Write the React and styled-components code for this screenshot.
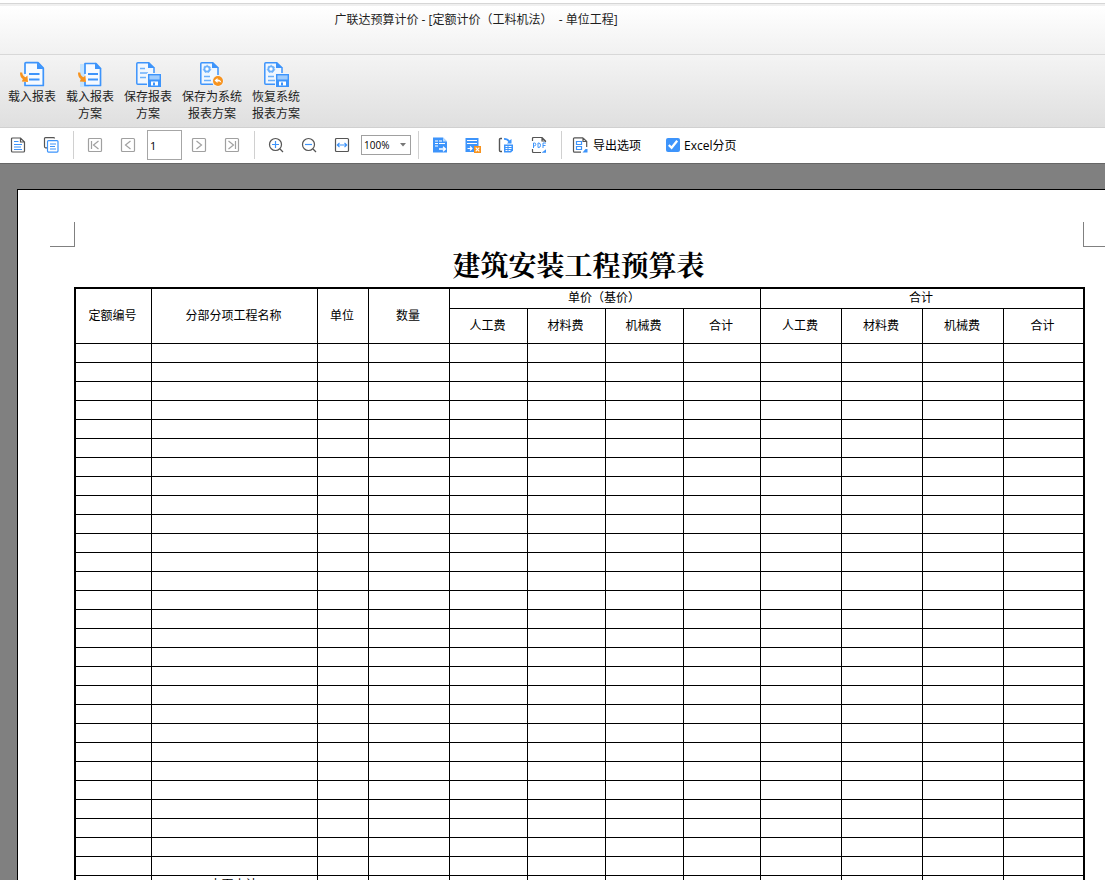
import React, { useState } from 'react'
import styled, { createGlobalStyle } from 'styled-components'

const BLUE = '#3d94fb'
const DARK = '#555555'
const GREY = '#a0a0a0'
const ORANGE = '#f7931e'

const GlobalStyle = createGlobalStyle`
  * {
    box-sizing: border-box;
  }

  body {
    margin: 0;
    font-family: 'Open Sans', 'Noto Sans CJK SC', sans-serif;
    font-size: 12px;
    color: #1e1e1e;
  }

  button,
  input,
  select {
    font: inherit;
    color: inherit;
  }
`

const Window = styled.div`
  display: flex;
  flex-direction: column;
  height: 100vh;
  overflow: hidden;
`

const TabStrip = styled.div`
  flex: none;
  height: 4px;
  background: #ffffff;
  border-bottom: 1px solid #d6d6d6;
`

const TitleBar = styled.header`
  flex: none;
  display: flex;
  justify-content: center;
  height: 51px;
  padding: 6px 153px 0 0;
  border-top: 2px solid #f0f0f0;
  border-bottom: 1px solid #d8d8d8;
  background: linear-gradient(#ffffff, #f1f1f1);
`

const AppTitle = styled.h1`
  margin: 0;
  font-size: 12px;
  line-height: 16px;
  font-weight: 400;
  white-space: pre;
`

const Ribbon = styled.nav`
  flex: none;
  display: flex;
  align-items: flex-start;
  height: 73px;
  padding: 6px 3px 0;
  border-bottom: 1px solid #d0d0d0;
  background: linear-gradient(#f4f4f4, #dfdfdf);
`

const RibbonButton = styled.button`
  display: flex;
  flex-direction: column;
  align-items: center;
  padding: 0 5px;
  border: 0;
  background: none;
  line-height: 17px;
`

const Toolbar = styled.div`
  flex: none;
  display: flex;
  align-items: center;
  height: 36px;
  padding: 0 0 1px 2px;
  border-bottom: 1px solid #666666;
  background: #ffffff;
`

const IconButton = styled.button`
  display: flex;
  align-items: center;
  justify-content: center;
  width: 33px;
  height: 30px;
  padding: 0 1px 0 0;
  border: 0;
  background: none;
`

const Separator = styled.span`
  width: 1px;
  height: 28px;
  margin: 0 5px;
  background: #d0d0d0;
`

const PageInput = styled.input`
  width: 35px;
  height: 30px;
  margin: 0 1px 0 2px;
  padding: 0 2px;
  border: 1px solid #a6a6a6;
  background: #ffffff;
  color: #000000;
  font-size: 11px;
`

const ZoomBox = styled.div`
  display: grid;
  align-items: center;
  width: 50px;
  margin: 0 2px;

  > * {
    grid-area: 1 / 1;
  }

  svg {
    justify-self: end;
    margin-right: 5px;
    pointer-events: none;
  }
`

const ZoomSelect = styled.select`
  appearance: none;
  width: 100%;
  height: 20px;
  padding: 0 0 0 2px;
  border: 1px solid #a0a0a0;
  border-radius: 0;
  background: #ffffff;
  color: #000000;
  font-size: 10px;
`

const TextButton = styled.button`
  display: flex;
  align-items: center;
  gap: 5px;
  padding: 0 5px;
  border: 0;
  background: none;
  color: #000000;
`

const CheckLabel = styled.label`
  display: flex;
  align-items: center;
  gap: 4px;
  margin-left: 20px;
  color: #000000;
`

const CheckBox = styled.input`
  width: 14px;
  height: 14px;
  margin: 0;
  accent-color: ${BLUE};
`

const Viewport = styled.main`
  flex: 1;
  min-height: 0;
  overflow: hidden;
  padding: 25px 0 0 17px;
  background: #808080;
`

const Paper = styled.section`
  padding: 32px 0 60px 32px;
  border-top: 1px solid #000000;
  border-left: 1px solid #000000;
  background: #ffffff;
`

const MarkRow = styled.div`
  display: flex;
  justify-content: space-between;
`

const CropMark = styled.span`
  width: ${({ $side }) => ($side === 'left' ? '25px' : '22px')};
  height: 25px;
  border-bottom: 1px solid #808080;
  border-${({ $side }) => ($side === 'left' ? 'right' : 'left')}: 1px solid #808080;
`

const Sheet = styled.div`
  padding: 0 20px 0 24px;
`

const SheetTitle = styled.h2`
  margin: 0;
  padding: 0 2px 6px 0;
  font-family: 'Noto Serif CJK SC', 'Noto Sans CJK SC', serif;
  font-size: 28px;
  line-height: 34px;
  font-weight: 700;
  text-align: center;
  color: #000000;
`

const BudgetTable = styled.table`
  width: 100%;
  table-layout: fixed;
  border: 2px solid #000000;
  border-collapse: separate;
  border-spacing: 0;
  color: #000000;
`

const Cell = styled.td`
  height: ${({ $height }) => $height || 19}px;
  padding: 0 2px 1px 0;
  border-bottom: 1px solid #000000;
  border-right: ${({ $last }) => ($last ? '0' : '1px solid #000000')};
  font-weight: 400;
  line-height: 16px;
  text-align: center;
`

const Arrow = () => (
  <path d="M1 11.500c0 3.500.8 5.200 2.900 6.400L2.800 20.500l6.200.500-.6-6.500-1.900 1.800C4.500 15.400 3.600 14 3.200 11.500z" fill={ORANGE} />
)

const Disk = () => (
  <g>
    <rect x="12" y="12" width="14" height="14" fill="#eef5fd" />
    <rect x="13.700" y="13.700" width="11.600" height="11.600" fill="#9fccfd" stroke={BLUE} strokeWidth="1.400" />
    <path d="M13 18.500h13v7H13z" fill={BLUE} />
    <rect x="16" y="20.500" width="7" height="4" fill="#ffffff" />
    <rect x="18" y="21.500" width="2" height="3" fill={BLUE} />
  </g>
)

const Gear = () => (
  <g>
    <circle cx="8" cy="8" r="2.600" fill="#ffffff" stroke="#6bb0fb" strokeWidth="1.800" />
    <circle cx="8" cy="8" r="3.700" fill="none" stroke="#6bb0fb" strokeDasharray="1.500 1.800" />
  </g>
)

function LoadIcon({ glow }) {
  return (
    <svg width="26" height="27" viewBox="0 0 26 27" fill="none">
      {glow && <path d="M3 3h9v23H3z" fill="#c6e4fd" />}
      <path
        d={glow ? 'M8 13V2.500h11l4.500 5V24.500H8V21' : 'M6 13V2.500q0-.8 1-.8h12l5.300 5.500V24.500H6V21'}
        fill="#f6faff"
        stroke={BLUE}
        strokeWidth="1.700"
        strokeLinejoin="round"
      />
      <path d="M18 1.500v6.500h6.500z" fill={BLUE} />
      <path d={glow ? 'M11 13h10M11 18.500h10' : 'M10 13h10.500M10 18.500h10.500'} stroke={BLUE} strokeWidth="2" />
      <Arrow />
    </svg>
  )
}

function SaveIcon({ gear, badge }) {
  return (
    <svg width="26" height="27" viewBox="0 0 26 27" fill="none">
      <path
        d="M14 23.300H2.800q-1 0-1-1V2.700q0-1 1-1h11l5.200 5V14"
        fill="#f1f7fe"
        stroke={BLUE}
        strokeWidth="1.500"
      />
      <path d="M13 1.500v5.600h6.800z" fill={BLUE} />
      {gear ? <Gear /> : <path d="M5 7.500h5M5 12h8" stroke="#6bb0fb" strokeWidth="1.500" />}
      <path d={gear ? 'M5 15.500h6M5 19.500h7' : 'M5 16.500h6'} stroke="#6bb0fb" strokeWidth="1.500" />
      {badge === 'undo' ? (
        <g>
          <circle cx="19" cy="20" r="6" fill="#eef2f8" />
          <circle cx="19" cy="20" r="5" fill={ORANGE} />
          <path d="M15.500 19.500l3-2.500v1.600c2.500 0 3.700 1.200 3.800 3.400-.9-1.200-2-1.500-3.800-1.400V22z" fill="#ffffff" />
        </g>
      ) : (
        <Disk />
      )}
    </svg>
  )
}

const Glyph = ({ children, color = DARK }) => (
  <svg width="16" height="16" viewBox="0 0 16 16" fill="none" stroke={color} strokeWidth="1.200">
    {children}
  </svg>
)

const glyphs = {
  report: (
    <Glyph>
      <path d="M10.500 1H2.500Q1.500 1 1.500 2v12q0 1 1 1h11q1 0 1-1V5zM10.500 1v4h4" />
      <path d="M4 4.500h4.500M4 7.500h8M4 10h7M4 12.500h8" stroke={BLUE} />
    </Glyph>
  ),
  reports: (
    <Glyph>
      <path d="M11.500 1.500V1.400Q11.500.600 10.500.600h-8q-1 0-1 1v8q0 1.200 1 1.200H4" />
      <path d="M5.500 3.600h8.500q1 0 1 1v9.500q0 1-1 1H5.500q-1 0-1-1V4.600q0-1 1-1zM7 7h6M7 9.500h5M7 12h6" stroke={BLUE} />
    </Glyph>
  ),
  zoomIn: (
    <Glyph>
      <circle cx="7.500" cy="7.500" r="6" />
      <path d="M12 12l3 3" />
      <path d="M4 7.500h7M7.500 4v7" stroke={BLUE} />
    </Glyph>
  ),
  zoomOut: (
    <Glyph>
      <circle cx="7.500" cy="7.500" r="6" />
      <path d="M12 12l3 3" />
      <path d="M4 7.500h7" stroke={BLUE} />
    </Glyph>
  ),
  fitWidth: (
    <Glyph>
      <rect x="1.500" y="1.500" width="13" height="13" rx="1" />
      <path d="M3.500 8h9M5.500 5.800L3.300 8l2.200 2.200M10.500 5.800L12.700 8l-2.200 2.200" stroke={BLUE} />
    </Glyph>
  ),
  exportReport: (
    <Glyph color="none">
      <path d="M1 .500h10l4 4V15.500H1z" fill={BLUE} />
      <path d="M11 .500v4h4z" fill="#b8dafd" />
      <path d="M3 4h3M7 4h3M3 6.500h3M7 6.500h6M3 9h3" stroke="#ffffff" />
      <path d="M7 12h6M11 9.700l2.500 2.300L11 14.300" stroke="#ffffff" strokeWidth="1.300" />
    </Glyph>
  ),
  exportExcel: (
    <Glyph color="none">
      <path d="M.500 1h13v8.500H9V15H.500z" fill={BLUE} />
      <path d="M2 3.500h10M2 6.500h10" stroke="#ffffff" />
      <path d="M2.500 11.500h4M5 9.500l2 2-2 2" stroke="#ffffff" />
      <rect x="9" y="9" width="7" height="7" fill={ORANGE} />
      <path d="M10.700 10.700l3.600 3.600M14.300 10.700l-3.600 3.600" stroke="#ffffff" />
    </Glyph>
  ),
  exportSheet: (
    <Glyph>
      <path d="M4 1.500H2.500q-1 0-1 1v11q0 1 1 1H4" strokeWidth="1.400" />
      <path d="M6 1c3 0 4.500 1 5.500 2.500l2-1.500v4.500H9l1.300-1.600C9.300 3.500 8 2.800 6 2.800z" fill={BLUE} stroke="none" />
      <path d="M6 7.500h9v6L13 15.500H6z" fill={BLUE} stroke="none" />
      <path d="M7.500 9.500h2M10.500 9.500h3M7.500 11.500h2M10.500 11.500h3M7.500 13.500h2M10.500 13.500h2" stroke="#ffffff" />
    </Glyph>
  ),
  exportPdf: (
    <Glyph>
      <path d="M1.500 4V1.500q0-1 1-1h8.500l3.500 3.500V5M1.500 12v2.500q0 1 1 1H10M11 .500V4h3.500" />
      <path d="M2.500 11V6h1q1.300 0 1.300 1.400T3.500 8.800h-1M7 6v4.500h.8q1.700 0 1.700-2.200T7.800 6zM12 11V6h3M12 8.500h2.500" stroke={BLUE} strokeWidth="1" />
      <path d="M10.500 15.700h4.500v-3.500z" fill={BLUE} stroke="none" />
    </Glyph>
  ),
  exportOptions: (
    <Glyph>
      <path d="M11 .800H2.500q-1 0-1 1v12.400q0 1 1 1H9M11 .800l3.700 3.700V10M11 .800v3.700h3.700" />
      <path d="M4.500 4.500h5v3h-5zM4.500 9.500h5v3h-5z" stroke={BLUE} />
      <path d="M10.500 15.500h5v-3.500h-2z" fill={BLUE} stroke="none" />
    </Glyph>
  ),
}

const NavGlyph = ({ d }) => (
  <Glyph color={GREY}>
    <rect x="1.500" y="1.500" width="13" height="13" rx="1" />
    <path d={d} />
  </Glyph>
)

const ribbonItems = [
  { lines: ['载入报表'], icon: <LoadIcon /> },
  { lines: ['载入报表', '方案'], icon: <LoadIcon glow /> },
  { lines: ['保存报表', '方案'], icon: <SaveIcon /> },
  { lines: ['保存为系统', '报表方案'], icon: <SaveIcon gear badge="undo" /> },
  { lines: ['恢复系统', '报表方案'], icon: <SaveIcon gear /> },
]

const columns = [76, 166, 51, 81, 78, 78, 78, 77, 81, 81, 81, 79]
const tableWidth = columns.reduce((sum, width) => sum + width, 0)
const leadHeads = ['定额编号', '分部分项工程名称', '单位', '数量']
const feeHeads = ['人工费', '材料费', '机械费', '合计']
const emptyRows = Array.from({ length: 28 }, (_, i) => i)

function ReportTable() {
  return (
    <BudgetTable>
      <colgroup>
        {columns.map((width, i) => (
          <col key={i} style={{ width: `${(width / tableWidth) * 100}%` }} />
        ))}
      </colgroup>
      <thead>
        <tr>
          {leadHeads.map(head => (
            <Cell as="th" key={head} rowSpan={2} $height={55}>
              {head}
            </Cell>
          ))}
          <Cell as="th" colSpan={4} $height={20}>
            单价（基价）
          </Cell>
          <Cell as="th" colSpan={4} $height={20} $last>
            合计
          </Cell>
        </tr>
        <tr>
          {[...feeHeads, ...feeHeads].map((head, i) => (
            <Cell as="th" key={i} $height={35} $last={i === 7}>
              {head}
            </Cell>
          ))}
        </tr>
      </thead>
      <tbody>
        {emptyRows.map(row => (
          <tr key={row}>
            {columns.map((_, i) => (
              <Cell key={i} $last={i === columns.length - 1} />
            ))}
          </tr>
        ))}
        <tr>
          {columns.map((_, i) => (
            <Cell key={i} $last={i === columns.length - 1}>
              {i === 1 && '本页小计'}
            </Cell>
          ))}
        </tr>
      </tbody>
    </BudgetTable>
  )
}

export default function App() {
  const [page, setPage] = useState('1')
  const [paged, setPaged] = useState(true)

  return (
    <Window>
      <GlobalStyle />
      <TabStrip />
      <TitleBar>
        <AppTitle>{'广联达预算计价 - [定额计价（工料机法）  - 单位工程]'}</AppTitle>
      </TitleBar>
      <Ribbon>
        {ribbonItems.map(({ lines, icon }) => (
          <RibbonButton key={lines.join('')}>
            {icon}
            {lines.map(line => (
              <span key={line}>{line}</span>
            ))}
          </RibbonButton>
        ))}
      </Ribbon>
      <Toolbar>
        <IconButton aria-label="报表">{glyphs.report}</IconButton>
        <IconButton aria-label="多页">{glyphs.reports}</IconButton>
        <Separator />
        <IconButton aria-label="首页">
          <NavGlyph d="M4.500 4v8M11.500 4l-5 4 5 4" />
        </IconButton>
        <IconButton aria-label="上一页">
          <NavGlyph d="M10.500 4l-5 4 5 4" />
        </IconButton>
        <PageInput aria-label="页码" value={page} onChange={e => setPage(e.target.value)} />
        <IconButton aria-label="下一页">
          <NavGlyph d="M5.500 4l5 4-5 4" />
        </IconButton>
        <IconButton aria-label="末页">
          <NavGlyph d="M11.500 4v8M4.500 4l5 4-5 4" />
        </IconButton>
        <Separator />
        <IconButton aria-label="放大">{glyphs.zoomIn}</IconButton>
        <IconButton aria-label="缩小">{glyphs.zoomOut}</IconButton>
        <IconButton aria-label="适合宽度">{glyphs.fitWidth}</IconButton>
        <ZoomBox>
          <ZoomSelect aria-label="缩放比例" defaultValue="100%">
            <option>50%</option>
            <option>100%</option>
            <option>200%</option>
          </ZoomSelect>
          <svg width="6" height="4" viewBox="0 0 6 4">
            <path d="M0 0h6L3 3.500z" fill="#777777" />
          </svg>
        </ZoomBox>
        <Separator />
        <IconButton aria-label="导出报表">{glyphs.exportReport}</IconButton>
        <IconButton aria-label="导出Excel">{glyphs.exportExcel}</IconButton>
        <IconButton aria-label="导出表格">{glyphs.exportSheet}</IconButton>
        <IconButton aria-label="导出PDF">{glyphs.exportPdf}</IconButton>
        <Separator />
        <TextButton>
          {glyphs.exportOptions}
          导出选项
        </TextButton>
        <CheckLabel>
          <CheckBox type="checkbox" checked={paged} onChange={e => setPaged(e.target.checked)} />
          Excel分页
        </CheckLabel>
      </Toolbar>
      <Viewport>
        <Paper>
          <MarkRow>
            <CropMark $side="left" />
            <CropMark $side="right" />
          </MarkRow>
          <Sheet>
            <SheetTitle>建筑安装工程预算表</SheetTitle>
            <ReportTable />
          </Sheet>
        </Paper>
      </Viewport>
    </Window>
  )
}
